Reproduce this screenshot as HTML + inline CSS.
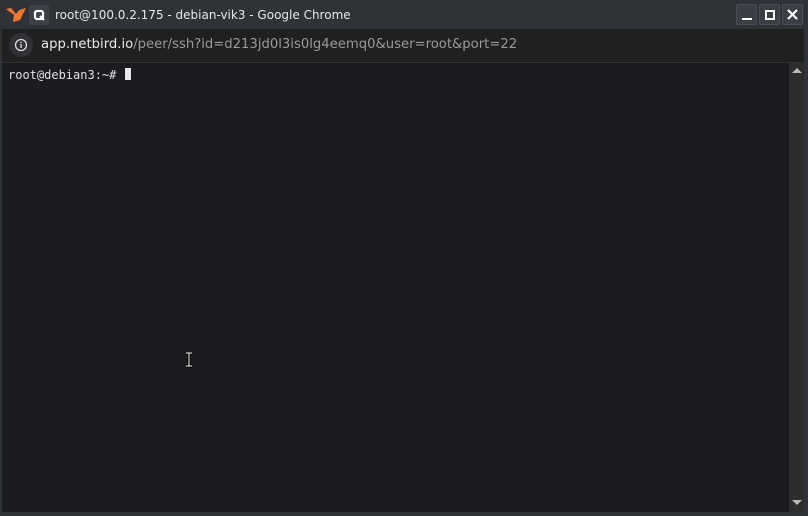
<!DOCTYPE html>
<html><head><style>
*{margin:0;padding:0;box-sizing:border-box}
body{width:808px;height:516px;background:#2f3337;position:relative;overflow:hidden;font-family:"Liberation Sans",sans-serif}
.tb{position:absolute;left:0;top:0;width:808px;height:29px;background:#2f3337}
.title{position:absolute;left:55px;top:8px;color:#e6e6e6;font-family:"DejaVu Sans",sans-serif;font-size:12px}
.btn{position:absolute;top:4px;width:21px;height:21px;background:#3a3f46;border:1px solid #4a4f56;border-radius:2px}
.addr{position:absolute;left:2px;top:29px;width:802px;height:33px;background:#202021}
.url{position:absolute;left:41px;top:37px;font-family:"DejaVu Sans",sans-serif;font-size:13.2px;color:#e8e8e8}
.url span{color:#9a9a9a}
.term{position:absolute;left:2px;top:63px;width:787px;height:449px;background:#1b1c1f}
.sb{position:absolute;left:789px;top:63px;width:15px;height:449px;background:#2d2d2d}
.prompt{position:absolute;left:8px;top:68px;font-family:"DejaVu Sans Mono","Liberation Mono",monospace;font-size:12px;color:#e0e0e0}
</style></head><body>
<div class="tb"></div>
<svg style="position:absolute;left:5px;top:6px" width="22" height="18"><path d="M1 3 L9 9 L8 16 L15 14 L21 2 L14 4 L11 8 L6 2 Z" fill="#f2762e"/></svg>
<div style="position:absolute;left:29px;top:5px;width:20px;height:20px;background:#3c4148;border-radius:2px"></div>
<svg style="position:absolute;left:33px;top:9px" width="12" height="12"><rect x="2" y="2" width="8" height="8" rx="2" fill="none" stroke="#fff" stroke-width="2.2"/><path d="M7 7 L11 11" stroke="#fff" stroke-width="2"/></svg>
<div class="title">root@100.0.2.175 - debian-vik3 - Google Chrome</div>
<div class="btn" style="left:736px"><div style="position:absolute;left:5px;top:13px;width:10px;height:2px;background:#fff"></div></div>
<div class="btn" style="left:759px"><div style="position:absolute;left:5px;top:5px;width:10px;height:10px;border:2px solid #fff"></div></div>
<div class="btn" style="left:782px"><svg width="19" height="19"><path d="M5 5 L14 14 M14 5 L5 14" stroke="#fff" stroke-width="2.2"/></svg></div>
<div class="addr"></div>
<div style="position:absolute;left:9px;top:33px;width:24px;height:24px;border-radius:12px;background:#303134"></div>
<svg style="position:absolute;left:14px;top:38px" width="14" height="14"><circle cx="7" cy="7" r="5.5" fill="none" stroke="#ddd" stroke-width="1.3"/><rect x="6.3" y="6" width="1.4" height="4" fill="#ddd"/><rect x="6.3" y="3.8" width="1.4" height="1.3" fill="#ddd"/></svg>
<div class="url">app.netbird.io<span>/peer/ssh?id=d213jd0l3is0lg4eemq0&amp;user=root&amp;port=22</span></div>
<div class="term"></div>
<div class="sb"></div>
<svg style="position:absolute;left:791px;top:67px" width="12" height="8"><path d="M1 6 L6 1 L11 6Z" fill="#bbb"/></svg>
<svg style="position:absolute;left:791px;top:499px" width="12" height="8"><path d="M1 1 L11 1 L6 6Z" fill="#bbb"/></svg>
<div class="prompt">root@debian3:~#</div>
<div style="position:absolute;left:125px;top:68px;width:6px;height:12px;background:#e8e8e8"></div>
<svg style="position:absolute;left:184px;top:352px" width="10" height="16"><path d="M2 1 H8 M5 1 V14 M2 14 H8" stroke="#000" stroke-width="3"/><path d="M2 1 H8 M5 1 V14 M2 14 H8" stroke="#fff" stroke-width="1"/></svg>
</body></html>
